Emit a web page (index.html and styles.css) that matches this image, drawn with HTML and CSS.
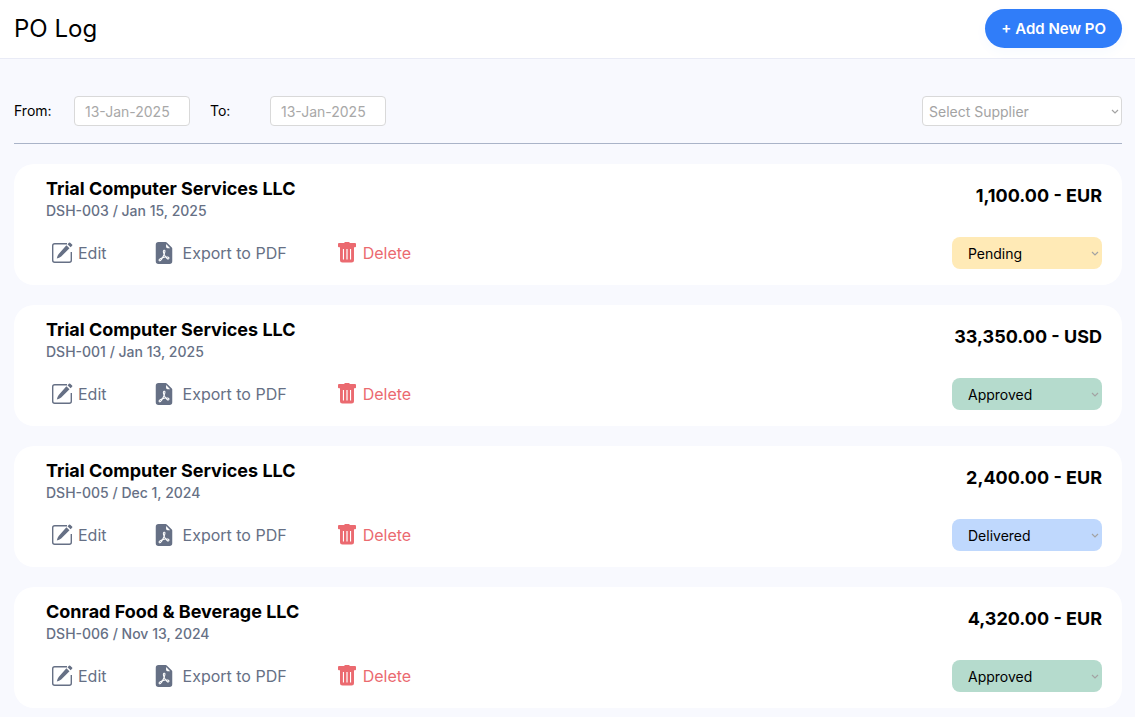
FILE: index.html
```
<!DOCTYPE html>
<html lang="en">
<head>
<meta charset="utf-8">
<title>PO Log</title>
<link rel="stylesheet" href="styles.css">
</head>
<body>
<svg class="sprite" aria-hidden="true">
  <symbol id="edit" viewBox="0 0 22 22">
    <path d="M16 1.700H3.700Q1.700 1.700 1.700 3.700V18.300Q1.700 20.300 3.700 20.300H18.300Q20.300 20.300 20.300 18.300V10" fill="none" stroke="currentColor" stroke-width="1.400"/>
    <path d="M15.400 3.300L18.500 6.200L10.200 14.500Q8.300 16 5.800 16.500Q6.200 13.900 7.700 11.900ZM16.500 2.200L18 .8Q18.600.3 19.200.8L21.100 2.500Q21.700 3.100 21.100 3.700L19.600 5.200Z" fill="currentColor"/>
  </symbol>
  <symbol id="pdf" viewBox="0 0 16 16">
    <path fill="currentColor" d="M5.523 12.424q.21-.124.459-.238a8 8 0 0 1-.45.606c-.28.337-.498.516-.635.572l-.035.012a.3.3 0 0 1-.026-.044c-.056-.11-.054-.216.04-.36.106-.165.319-.354.647-.548m2.455-1.647q-.178.037-.356.078a21 21 0 0 0 .5-1.050 12 12 0 0 0 .51.858q-.326.048-.654.114m2.525.939a4 4 0 0 1-.435-.41q.344.007.612.054c.317.057.466.147.518.209a.1.1 0 0 1 .026.064.44.44 0 0 1-.06.2.3.3 0 0 1-.094.124.1.1 0 0 1-.069.015c-.09-.003-.258-.066-.498-.256M8.278 6.970c-.04.244-.108.524-.2.829a5 5 0 0 1-.089-.346c-.076-.353-.087-.63-.046-.822.038-.177.11-.248.196-.283a.5.5 0 0 1 .145-.04c.013.03.028.092.032.198q.008.183-.038.465z"/>
    <path fill="currentColor" fill-rule="evenodd" d="M4 0h5.293A1 1 0 0 1 10 .293L13.707 4a1 1 0 0 1 .293.707V14a2 2 0 0 1-2 2H4a2 2 0 0 1-2-2V2a2 2 0 0 1 2-2m5.500 1.500v2a1 1 0 0 0 1 1h2zM4.165 13.668c.09.18.23.343.438.419.207.075.412.04.58-.03.318-.13.635-.436.926-.786.333-.401.683-.927 1.021-1.510a11.700 11.700 0 0 1 1.997-.406c.3.383.61.713.91.95.28.22.603.403.934.417a.86.86 0 0 0 .51-.138c.155-.101.27-.247.354-.416.09-.181.145-.37.138-.563a.84.84 0 0 0-.2-.518c-.226-.27-.596-.4-.96-.465a5.800 5.800 0 0 0-1.335-.05 11 11 0 0 1-.98-1.686c.25-.66.437-1.284.52-1.794.036-.218.055-.426.048-.614a1.240 1.240 0 0 0-.127-.538.7.7 0 0 0-.477-.365c-.202-.043-.41 0-.601.077-.377.15-.576.47-.651.823-.073.34-.04.736.046 1.136.088.406.238.848.43 1.295a20 20 0 0 1-1.062 2.227 7.700 7.700 0 0 0-1.482.645c-.37.22-.699.48-.897.787-.21.326-.275.714-.08 1.103"/>
  </symbol>
  <symbol id="trash" viewBox="0 0 18 22">
    <path fill="currentColor" fill-rule="evenodd" d="M1 1H6L7 0H11L12 1H17Q18 1 18 2V4.500Q18 5.200 17 5.200L16 5.300V18Q16 20.500 13.500 20.500H4.500Q2 20.500 2 18V5.300L1 5.200Q0 5.200 0 4.500V2Q0 1 1 1ZM4.900 7V17.600H6V7ZM8.400 7V17.600H9.600V7ZM12 7V17.600H13.100V7Z"/>
  </symbol>
</svg>

<header class="topbar">
  <h1 class="title">PO Log</h1>
  <button class="add" type="button">+ Add New PO</button>
</header>

<main class="content">
  <form class="filters">
    <label class="filter-label" for="from">From:</label>
    <input class="date" id="from" type="text" placeholder="13-Jan-2025">
    <label class="filter-label to" for="to">To:</label>
    <input class="date" id="to" type="text" placeholder="13-Jan-2025">
    <span class="select-wrap supplier-wrap">
      <select class="supplier" aria-label="Supplier"><option>Select Supplier</option></select>
      <svg class="chevron" viewBox="0 0 8 6" aria-hidden="true"><path d="M1 1L4 4L7 1"/></svg>
    </span>
  </form>

  <section class="list">
    <article class="card">
      <div class="info">
        <h2 class="name">Trial Computer Services LLC</h2>
        <p class="meta">DSH-003 / Jan 15, 2025</p>
        <div class="actions">
          <button class="action edit" type="button"><svg class="icon" aria-hidden="true"><use href="#edit"/></svg>Edit</button>
          <button class="action export" type="button"><svg class="icon" aria-hidden="true"><use href="#pdf"/></svg>Export to PDF</button>
          <button class="action delete" type="button"><svg class="icon bin" aria-hidden="true"><use href="#trash"/></svg>Delete</button>
        </div>
      </div>
      <div class="side">
        <p class="amount">1,100.00 - EUR</p>
        <span class="select-wrap">
          <select class="status pending" aria-label="Status"><option>Pending</option><option>Approved</option><option>Delivered</option></select>
          <svg class="chevron" viewBox="0 0 8 6" aria-hidden="true"><path d="M1 1L4 4L7 1"/></svg>
        </span>
      </div>
    </article>

    <article class="card">
      <div class="info">
        <h2 class="name">Trial Computer Services LLC</h2>
        <p class="meta">DSH-001 / Jan 13, 2025</p>
        <div class="actions">
          <button class="action edit" type="button"><svg class="icon" aria-hidden="true"><use href="#edit"/></svg>Edit</button>
          <button class="action export" type="button"><svg class="icon" aria-hidden="true"><use href="#pdf"/></svg>Export to PDF</button>
          <button class="action delete" type="button"><svg class="icon bin" aria-hidden="true"><use href="#trash"/></svg>Delete</button>
        </div>
      </div>
      <div class="side">
        <p class="amount">33,350.00 - USD</p>
        <span class="select-wrap">
          <select class="status approved" aria-label="Status"><option>Pending</option><option selected>Approved</option><option>Delivered</option></select>
          <svg class="chevron" viewBox="0 0 8 6" aria-hidden="true"><path d="M1 1L4 4L7 1"/></svg>
        </span>
      </div>
    </article>

    <article class="card">
      <div class="info">
        <h2 class="name">Trial Computer Services LLC</h2>
        <p class="meta">DSH-005 / Dec 1, 2024</p>
        <div class="actions">
          <button class="action edit" type="button"><svg class="icon" aria-hidden="true"><use href="#edit"/></svg>Edit</button>
          <button class="action export" type="button"><svg class="icon" aria-hidden="true"><use href="#pdf"/></svg>Export to PDF</button>
          <button class="action delete" type="button"><svg class="icon bin" aria-hidden="true"><use href="#trash"/></svg>Delete</button>
        </div>
      </div>
      <div class="side">
        <p class="amount">2,400.00 - EUR</p>
        <span class="select-wrap">
          <select class="status delivered" aria-label="Status"><option>Pending</option><option>Approved</option><option selected>Delivered</option></select>
          <svg class="chevron" viewBox="0 0 8 6" aria-hidden="true"><path d="M1 1L4 4L7 1"/></svg>
        </span>
      </div>
    </article>

    <article class="card">
      <div class="info">
        <h2 class="name">Conrad Food &amp; Beverage LLC</h2>
        <p class="meta">DSH-006 / Nov 13, 2024</p>
        <div class="actions">
          <button class="action edit" type="button"><svg class="icon" aria-hidden="true"><use href="#edit"/></svg>Edit</button>
          <button class="action export" type="button"><svg class="icon" aria-hidden="true"><use href="#pdf"/></svg>Export to PDF</button>
          <button class="action delete" type="button"><svg class="icon bin" aria-hidden="true"><use href="#trash"/></svg>Delete</button>
        </div>
      </div>
      <div class="side">
        <p class="amount">4,320.00 - EUR</p>
        <span class="select-wrap">
          <select class="status approved" aria-label="Status"><option>Pending</option><option selected>Approved</option><option>Delivered</option></select>
          <svg class="chevron" viewBox="0 0 8 6" aria-hidden="true"><path d="M1 1L4 4L7 1"/></svg>
        </span>
      </div>
    </article>
  </section>
</main>
</body>
</html>
```
FILE: styles.css
```
* { box-sizing: border-box; }

body {
  margin: 0;
  background: #f8f9fe;
  color: #000;
  font-family: Inter, "Liberation Sans", sans-serif;
  font-size: 14px;
}

h1, h2, p { margin: 0; }

button, input, select { font: inherit; }

.sprite { display: none; }

.topbar {
  display: flex;
  align-items: center;
  justify-content: space-between;
  padding: 9px 13px 10px 14px;
  background: #fff;
  border-bottom: 1px solid #e9ebf6;
}

.title {
  font-size: 24px;
  font-weight: 400;
  line-height: 28px;
}

.add {
  padding: 0 16px;
  border: 0;
  border-radius: 20px;
  background: #307df9;
  box-shadow: 0 4px 12px rgba(48, 125, 249, 0.04);
  color: #fff;
  font-size: 15px;
  font-weight: 600;
  line-height: 39px;
}

.content { padding: 37px 13px 10px 14px; }

.filters {
  display: flex;
  align-items: center;
  padding-bottom: 17px;
  border-bottom: 1px solid #aab4c8;
}

.filter-label {
  width: 60px;
  padding-bottom: 2px;
}

.to { margin-left: 20px; }

.date {
  width: 116px;
  height: 30px;
  padding: 0 10px;
  border: 1px solid #d9d9d9;
  border-radius: 4px;
  background: #fff;
}

.date::placeholder {
  color: #a8a8a8;
  opacity: 1;
}

.select-wrap {
  position: relative;
  display: flex;
}

.supplier-wrap { margin-left: auto; }

.supplier, .status {
  appearance: none;
  color: #000;
}

.supplier {
  width: 200px;
  height: 30px;
  padding: 0 6px;
  border: 1px solid #d9d9d9;
  border-radius: 4px;
  background: #fff;
  color: #a3a3a3;
}

.chevron {
  position: absolute;
  right: 3px;
  top: 50%;
  width: 8px;
  height: 6px;
  margin-top: -2px;
  fill: none;
  stroke: #a3a3a3;
  stroke-width: 1.2;
  pointer-events: none;
}

.list {
  display: grid;
  gap: 20px;
  margin-top: 20px;
}

.card {
  display: flex;
  justify-content: space-between;
  padding: 14px 20px 16px 32px;
  border-radius: 20px;
  background: #fff;
}

.name {
  font-size: 18px;
  font-weight: 700;
  line-height: 22px;
}

.meta {
  color: #667085;
  font-weight: 500;
  line-height: 22px;
}

.actions {
  display: flex;
  margin: 20px 0 5px;
}

.action {
  display: flex;
  align-items: center;
  padding: 0;
  border: 0;
  background: none;
  color: #667085;
  font-size: 16px;
  line-height: 22px;
}

.icon {
  width: 22px;
  height: 22px;
}

.edit {
  gap: 5px;
  margin-left: 5px;
}

.export {
  gap: 8px;
  margin-left: 46px;
}

.delete {
  gap: 7px;
  margin-left: 51px;
  color: #eb6a70;
}

.bin { width: 18px; }

.side {
  display: flex;
  flex-direction: column;
  align-items: flex-end;
  justify-content: space-between;
  padding-top: 7px;
}

.amount {
  font-size: 18px;
  font-weight: 700;
  line-height: 22px;
}

.status {
  width: 150px;
  height: 32px;
  padding: 0 16px;
  border: 0;
  border-radius: 8px;
}

.pending { background: #ffeab6; }
.approved { background: #b5dbcd; }
.delivered { background: #bfd8fd; }
```
